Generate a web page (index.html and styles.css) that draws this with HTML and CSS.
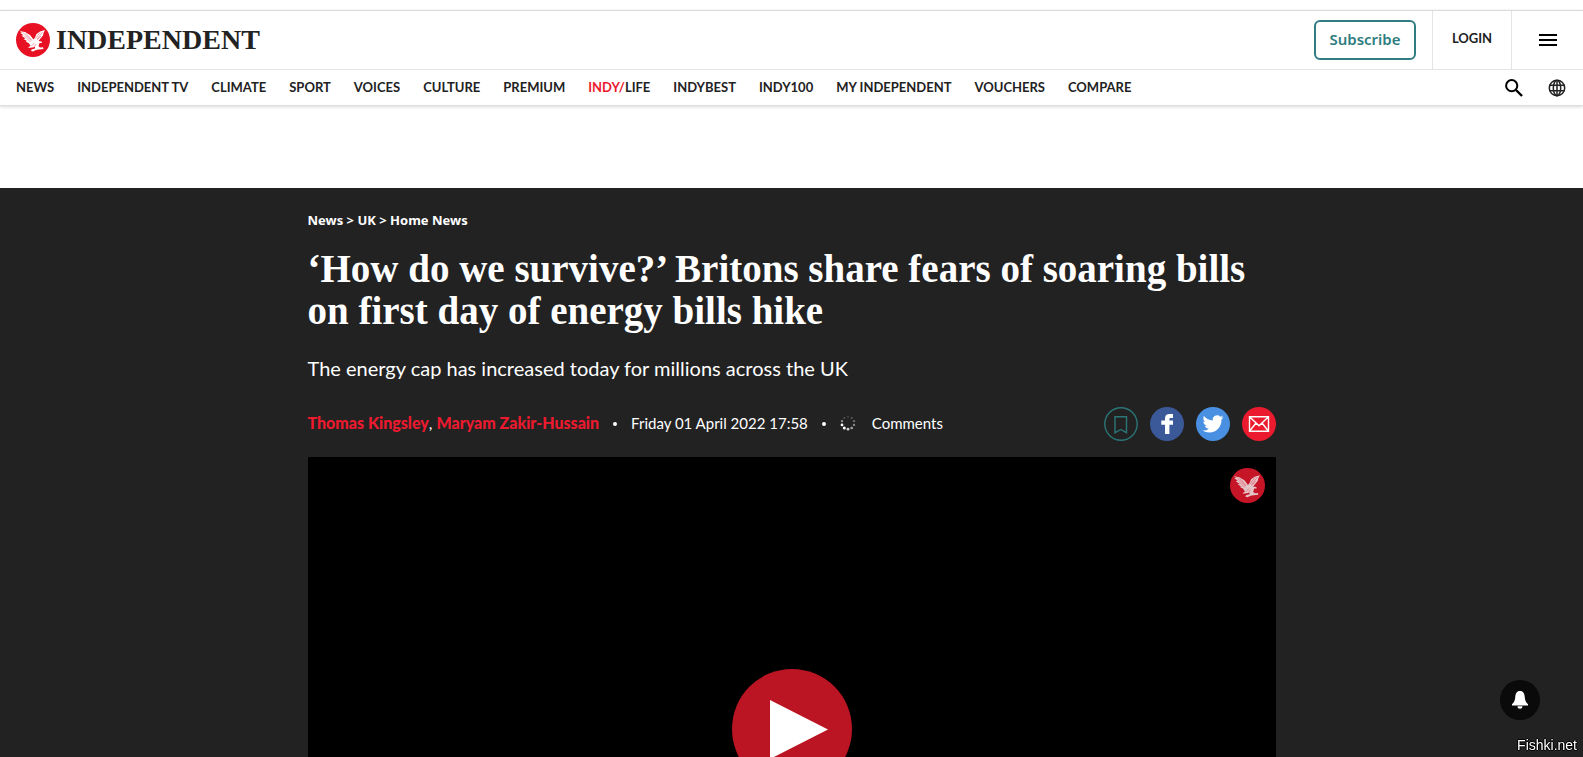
FILE: index.html
```
<!DOCTYPE html>
<html lang="en">
<head>
    <meta charset="utf-8">
    <meta name="viewport" content="width=device-width, initial-scale=1">
    <title>‘How do we survive?’ Britons share fears of soaring bills | The Independent</title>
    <link rel="stylesheet" href="styles.css">
</head>
<body>
    <!-- eagle is shared by the masthead and the video -->
    <svg class="sprite" aria-hidden="true">
        <symbol id="eagle" viewBox="0 0 34 34">
            <path d="M3.500 7.500 L6 8.500 L9 9 L14 12 L17.500 16.500 L19 14.500 L20.500 11 L24 8.500 L29 7 L27.500 10 L27 12.500 L24.500 15.500 L22.500 18 L25.500 18.500 L26 20 L23.500 20 L22.500 23 L24 24.500 L27 24.300 L27.500 26 L23 26.500 L20 27 L17 28.500 L15 28 L15.500 26.500 L19 25.500 L19 24 L16 24.500 L12 25 L14.500 22.500 L12.500 20 L9.500 18.500 L11 18 L7.500 16 L9.500 15.500 L5.500 12.800 L7.500 12.300 L4 9.800 L6 9.800 Z"/>
            <path d="M7 9.500l8 8M10 10.500l6 7M8.500 13l6 6M26.500 9l-5.500 7M24 9.500l-4.500 6M25 13l-4 4M15.500 23l3-3M18 24l2-3" class="feather"/>
        </symbol>
    </svg>

    <header class="header">
        <div class="masthead">
            <a href="#" class="logo" aria-label="Independent">
                <svg class="logo-eagle" viewBox="0 0 34 34"><circle cx="17" cy="17" r="17"/><use href="#eagle"/></svg>
                <span class="logo-text">INDEPENDENT</span>
            </a>
            <div class="account">
                <button type="button" class="subscribe">Subscribe</button>
                <a href="#" class="login">LOGIN</a>
                <button type="button" class="menu" aria-label="Menu">
                    <svg width="18" height="12" viewBox="0 0 18 12"><path d="M0 0h18v2H0zM0 5h18v2H0zM0 10h18v2H0z"/></svg>
                </button>
            </div>
        </div>
        <nav class="nav">
            <ul class="nav-list">
                <li><a href="#">NEWS</a></li>
                <li><a href="#">INDEPENDENT TV</a></li>
                <li><a href="#">CLIMATE</a></li>
                <li><a href="#">SPORT</a></li>
                <li><a href="#">VOICES</a></li>
                <li><a href="#">CULTURE</a></li>
                <li><a href="#">PREMIUM</a></li>
                <li><a href="#"><span class="red">INDY/</span>LIFE</a></li>
                <li><a href="#">INDYBEST</a></li>
                <li><a href="#">INDY100</a></li>
                <li><a href="#">MY INDEPENDENT</a></li>
                <li><a href="#">VOUCHERS</a></li>
                <li><a href="#">COMPARE</a></li>
            </ul>
            <div class="nav-tools">
                <button type="button" aria-label="Search">
                    <svg width="18" height="18" viewBox="0 0 18 18" fill="none" stroke="#000"><circle cx="6.7" cy="6.7" r="5.6" stroke-width="2"/><path d="M11 11l6 6" stroke-width="2.4"/></svg>
                </button>
                <button type="button" aria-label="Edition">
                    <svg width="18" height="18" viewBox="0 0 18 18" fill="none" stroke="#222" stroke-width="1.5"><circle cx="9" cy="9" r="7.7"/><ellipse cx="9" cy="9" rx="3.7" ry="7.7"/><path d="M9 1v16M1.5 6.3h15M1.5 11.7h15"/></svg>
                </button>
            </div>
        </nav>
    </header>

    <main class="article">
        <div class="content">
            <div class="breadcrumb"><a href="#">News</a> &gt; <a href="#">UK</a> &gt; <a href="#">Home News</a></div>
            <h1>‘How do we survive?’ Britons share fears of soaring bills on first day of energy bills hike</h1>
            <h2>The energy cap has increased today for millions across the UK</h2>
            <div class="meta">
                <div class="authors"><a href="#">Thomas Kingsley</a>, <a href="#">Maryam Zakir-Hussain</a></div>
                <span class="dot"></span>
                <time datetime="2022-04-01T17:58">Friday 01 April 2022 17:58</time>
                <span class="dot"></span>
                <a href="#" class="comments">
                    <svg width="16" height="16" viewBox="0 0 16 16" fill="#fff">
                        <circle cx="8" cy="1.8" r="1.1" opacity=".15"/>
                        <circle cx="11.7" cy="3" r="1.1" opacity=".25"/>
                        <circle cx="14" cy="6.1" r="1.2" opacity=".35"/>
                        <circle cx="14" cy="9.9" r="1.2" opacity=".45"/>
                        <circle cx="11.7" cy="13" r="1.3" opacity=".6"/>
                        <circle cx="8" cy="14.2" r="1.4" opacity=".8"/>
                        <circle cx="4.3" cy="13" r="1.5"/>
                        <circle cx="2" cy="9.9" r="1.4"/>
                        <circle cx="2" cy="6.1" r="1.2" opacity=".5"/>
                        <circle cx="4.3" cy="3" r="1.1" opacity=".2"/>
                    </svg>
                    Comments
                </a>
                <div class="share">
                    <button type="button" class="bookmark" aria-label="Bookmark">
                        <svg viewBox="0 0 34 34" fill="none" stroke="#2b7577" stroke-width="1.4"><circle cx="17" cy="17" r="16.2"/><path d="M11 9.7h11.5v16l-5.7-3.2-5.8 3.2z"/></svg>
                    </button>
                    <a href="#" class="facebook" aria-label="Facebook">
                        <svg viewBox="0 0 34 34" fill="#fff"><path d="M15 27v-9.200h-3.700v-4.300H15v-2c0-3.200 1.700-4.600 4.600-4.600H23v4h-2c-1.200 0-1.600.5-1.600 1.400v1.200H23v4.300h-3.600V27z"/></svg>
                    </a>
                    <a href="#" class="twitter" aria-label="Twitter">
                        <svg viewBox="0 0 34 34"><path transform="translate(6.500 6.300) scale(.88)" fill="#fff" d="M23.950 4.570a10 10 0 0 1-2.820.77 4.960 4.960 0 0 0 2.160-2.720c-.95.550-2 .960-3.130 1.180a4.920 4.920 0 0 0-8.380 4.480C7.690 8.090 4.070 6.130 1.640 3.160a4.820 4.820 0 0 0-.66 2.470c0 1.710.87 3.210 2.190 4.100a4.900 4.900 0 0 1-2.230-.62v.06a4.920 4.920 0 0 0 3.950 4.830 5 5 0 0 1-2.210.08 4.940 4.940 0 0 0 4.600 3.420A9.870 9.870 0 0 1 0 19.540a14 14 0 0 0 7.550 2.210c9.050 0 14-7.500 14-13.980 0-.21 0-.42-.02-.63a9.940 9.940 0 0 0 2.420-2.570z"/></svg>
                    </a>
                    <a href="#" class="mail" aria-label="Email">
                        <svg viewBox="0 0 34 34" fill="none" stroke="#fff" stroke-width="1.400"><path d="M7.500 9.700h19v14.600h-19zM7.500 9.700l9.500 9 9.500-9M7.500 24.300l6.500-8.300M26.500 24.300L20 16"/></svg>
                    </a>
                </div>
            </div>
            <div class="video">
                <svg class="video-eagle" viewBox="0 0 34 34"><circle cx="17" cy="17" r="17"/><use href="#eagle"/></svg>
                <button type="button" class="play" aria-label="Play">
                    <svg width="120" height="120" viewBox="0 0 120 120"><path d="M38 31v59l58-29.500z" fill="#fff"/></svg>
                </button>
            </div>
        </div>
    </main>

    <button type="button" class="notify" aria-label="Notifications">
        <svg width="18" height="18" viewBox="0 0 18 18" fill="#fff"><path d="M9 0C5.600 0 4.600 2.500 4.300 5.500 4 9 3.700 11 1 13.200V14.500h16v-1.300C14.300 11 14 9 13.700 5.500 13.400 2.500 12.400 0 9 0zM6.500 15.300a2.500 2.500 0 0 0 5 0z"/></svg>
    </button>
    <div class="watermark">Fishki.net</div>
</body>
</html>
```

FILE: styles.css
```
* {
    box-sizing: border-box;
}

body {
    margin: 0;
    height: 100vh;
    overflow: hidden;
    background: #fff;
    color: #222;
    font-family: "Noto Sans", sans-serif;
}

a {
    color: inherit;
    text-decoration: none;
}

button {
    padding: 0;
    border: none;
    background: none;
    font-family: inherit;
    cursor: pointer;
}

svg {
    display: block;
}

.sprite {
    display: none;
}

.feather {
    fill: none;
    stroke: #e61a2f;
    stroke-width: 0.4;
}

/* header */
.header {
    margin-top: 10px;
    border-top: 1px solid #d9d9d9;
    border-bottom: 1px solid #dedede;
    box-shadow: 0 1px 3px rgba(0,0,0,0.15);
}

.masthead {
    display: flex;
    justify-content: space-between;
    height: 59px;
    border-bottom: 1px solid #e2e4e6;
}

.logo {
    display: flex;
    align-items: center;
    gap: 6px;
    padding-left: 16px;
}

.logo-eagle {
    width: 34px;
    height: 34px;
    fill: #fff;
}

.logo-eagle circle {
    fill: #e81123;
}

.logo-text {
    font-family: "Liberation Serif", serif;
    font-size: 28px;
    font-weight: bold;
    line-height: 34px;
}

.account {
    display: flex;
    align-items: center;
}

.subscribe {
    width: 102px;
    height: 40px;
    margin-right: 16px;
    padding-bottom: 2px;
    border: 2px solid #2f7d80;
    border-radius: 6px;
    color: #2f7d80;
    font-family: "Noto Sans", sans-serif;
    font-size: 15px;
    font-weight: 600;
}

.login {
    width: 80px;
    height: 100%;
    border-left: 1px solid #e2e4e6;
    border-right: 1px solid #e2e4e6;
    font-family: Lato, sans-serif;
    font-size: 13px;
    font-weight: bold;
    line-height: 54px;
    text-align: center;
}

.menu {
    display: flex;
    align-items: center;
    justify-content: center;
    width: 71px;
    height: 100%;
}

.nav {
    display: flex;
    justify-content: space-between;
    align-items: center;
    height: 35px;
    padding: 0 17px 0 16px;
}

.nav-list {
    display: flex;
    gap: 23px;
    margin: 0;
    padding: 0 0 2px;
    list-style: none;
    font-family: Lato, sans-serif;
    font-size: 13px;
    font-weight: bold;
}

.red {
    color: #ec1a2e;
}

.nav-tools {
    display: flex;
    gap: 25px;
}

/* article */
.article {
    margin-top: 82px;
    padding-top: 22px;
    background: #222;
    color: #fff;
}

.content {
    max-width: 968px;
    margin: 0 auto;
}

.breadcrumb {
    font-family: "Noto Sans", sans-serif;
    font-size: 13px;
    font-weight: bold;
    line-height: 20px;
}

h1 {
    margin: 18px 0 0;
    font-family: "Liberation Serif", serif;
    font-size: 39px;
    font-weight: bold;
    line-height: 42px;
}

h2 {
    margin: 22px 0 0;
    font-family: Lato, sans-serif;
    font-size: 20px;
    font-weight: normal;
    line-height: 28px;
}

.meta {
    display: flex;
    align-items: center;
    margin-top: 25px;
    padding-bottom: 16px;
    font-family: Lato, sans-serif;
    font-size: 15px;
    line-height: 24px;
}

.authors,
.meta time,
.comments {
    padding-bottom: 2px;
}

.authors {
    font-size: 16px;
}

.authors a {
    color: #ec1a2e;
    font-weight: 900;
}

.dot {
    width: 4px;
    height: 4px;
    margin: 0 14px;
    border-radius: 50%;
    background: #fff;
}

.comments {
    display: flex;
    align-items: center;
    gap: 16px;
}

.share {
    display: flex;
    gap: 12px;
    margin-left: auto;
}

.share > * {
    width: 34px;
    height: 34px;
    border-radius: 50%;
}

.facebook {
    background: #3b5998;
}

.twitter {
    background: #4a90e2;
}

.mail {
    background: #ec1a2e;
}

.video {
    display: flex;
    position: relative;
    align-items: center;
    justify-content: center;
    aspect-ratio: 16 / 9;
    background: #000;
}

.video-eagle {
    position: absolute;
    top: 11px;
    right: 11px;
    width: 35px;
    height: 35px;
    fill: #e3c5c8;
}

.video-eagle circle {
    fill: #c71528;
}

.play {
    width: 120px;
    height: 120px;
    border-radius: 50%;
    background: #bb1423;
}

.notify {
    display: flex;
    position: fixed;
    right: 43px;
    bottom: 37px;
    align-items: center;
    justify-content: center;
    width: 40px;
    height: 40px;
    border-radius: 50%;
    background: #0a0a0a;
}

.watermark {
    position: fixed;
    right: 6px;
    bottom: 3px;
    color: #fff;
    font-family: "Liberation Sans", sans-serif;
    font-size: 14px;
    line-height: 18px;
    text-shadow: 1px 0 #000, -1px 0 #000, 0 1px #000, 0 -1px #000;
}
```
